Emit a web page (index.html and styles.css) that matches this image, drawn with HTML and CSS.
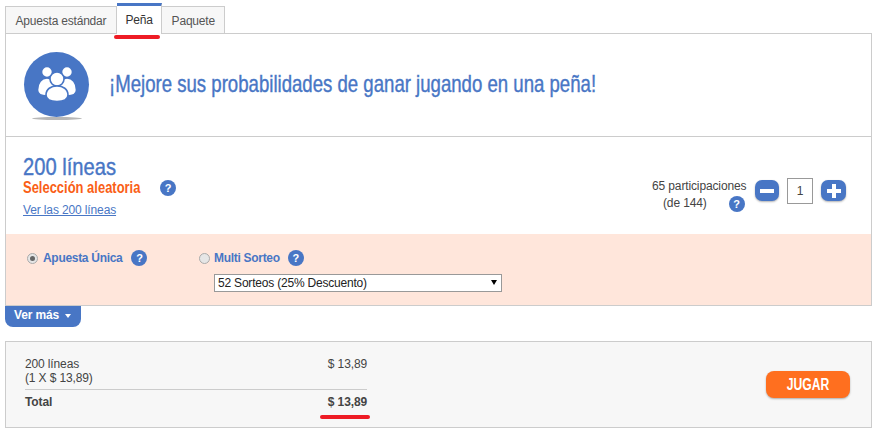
FILE: index.html
```html
<!DOCTYPE html>
<html lang="es">
<head>
    <meta charset="UTF-8">
    <meta name="viewport" content="width=device-width, initial-scale=1.0">
    <title>Peña</title>
    <link rel="stylesheet" href="styles.css">
</head>
<body>
    <div class="tabs">
        <div class="tab">Apuesta estándar</div>
        <div class="tab active">Peña<span class="mark mark-tab"></span></div>
        <div class="tab">Paquete</div>
    </div>

    <div class="panel">
        <div class="hero">
            <div class="hero-icon">
                <div class="hero-circle">
                    <svg width="40" height="36" viewBox="0 0 40 36">
                        <g fill="#fff" stroke="#4876c5" stroke-width="1.6">
                            <circle cx="10" cy="6" r="5.5"/>
                            <circle cx="30" cy="6" r="5.5"/>
                            <path d="M.5 24c0-7 4-12 9.500-12s9.500 5 9.500 12c0 4-4 6-9.500 6S.5 28 .5 24z"/>
                            <path d="M20.500 24c0-7 4-12 9.500-12s9.500 5 9.500 12c0 4-4 6-9.500 6s-9.500-2-9.500-6z"/>
                            <circle cx="20" cy="13" r="7"/>
                            <path d="M9 29c0-6 5-9 11-9s11 3 11 9c0 5-5 6.500-11 6.500S9 34 9 29z"/>
                        </g>
                    </svg>
                </div>
                <div class="hero-shadow"></div>
            </div>
            <h1>¡Mejore sus probabilidades de ganar jugando en una peña!</h1>
        </div>

        <div class="lines">
            <div class="lines-info">
                <div class="lines-title">200 líneas</div>
                <div class="lines-sub">
                    <span class="lines-sub-text">Selección aleatoria</span>
                    <span class="help">?</span>
                </div>
                <a class="lines-link" href="#">Ver las 200 líneas</a>
            </div>
            <div class="shares">
                <div class="shares-text">
                    <div class="shares-top">65 participaciones</div>
                    <div class="shares-bottom"><span>(de 144)</span><span class="help">?</span></div>
                </div>
                <button class="step step-minus" type="button">
                    <svg width="16" height="16" viewBox="0 0 16 16"><rect x="1" y="6" width="14" height="4" fill="#fff"/></svg>
                </button>
                <div class="qty">1</div>
                <button class="step" type="button">
                    <svg width="16" height="16" viewBox="0 0 16 16"><path d="M6 1h4v5h5v4h-5v5H6v-5H1V6h5z" fill="#fff"/></svg>
                </button>
            </div>
        </div>

        <div class="options">
            <div class="option option-single">
                <span class="radio checked"></span>
                <span class="option-label">Apuesta Única</span>
                <span class="help">?</span>
            </div>
            <div class="option-multi">
                <div class="option">
                    <span class="radio"></span>
                    <span class="option-label">Multi Sorteo</span>
                    <span class="help">?</span>
                </div>
                <div class="draws-wrap">
                    <select class="draws">
                        <option>52 Sorteos (25% Descuento)</option>
                    </select>
                </div>
            </div>
        </div>
    </div>

    <div class="more">Ver más <span class="caret"></span></div>

    <div class="summary">
        <div class="summary-table">
            <div class="summary-row">
                <div>200 líneas<br>(1 X $ 13,89)</div>
                <div>$ 13,89</div>
            </div>
            <div class="summary-row summary-total">
                <div>Total</div>
                <div class="total-price">$ 13,89<span class="mark mark-total"></span></div>
            </div>
        </div>
        <button class="play" type="button"><span class="play-text">JUGAR</span></button>
    </div>
</body>
</html>
```

FILE: styles.css
```css
:root {
    --blue: #4876c5;
    --orange: #ff6f1f;
    --border: #cccccc;
    --text: #444444;
    --peach: #ffe6db;
    --red: #ee1c25;
}

body {
    margin: 0;
    width: 867px;
    padding: 3px 7px 0 5px;
    font-family: "Liberation Sans", Arial, sans-serif;
    font-size: 12px;
    letter-spacing: -0.13px;
    color: var(--text);
    background: #fff;
}

.tabs {
    display: flex;
    align-items: flex-end;
    height: 30px;
    letter-spacing: -0.2px;
}

.tab {
    position: relative;
    height: 26px;
    line-height: 28px;
    padding: 0 9.5px;
    border: 1px solid var(--border);
    border-bottom: 0;
    border-left-width: 0;
    background: #f7f7f7;
    color: #555;
}

.tab:first-child {
    border-left-width: 1px;
}

.tab.active {
    height: 27px;
    line-height: 29px;
    padding: 0 8.5px 1px;
    border-top: 3px solid var(--blue);
    background: #fff;
    color: #333;
    z-index: 1;
    margin-bottom: -1px;
}

.mark {
    position: absolute;
    height: 4px;
    border-radius: 2px;
    background: var(--red);
}

.mark-tab {
    left: -3px;
    right: 1px;
    bottom: -5px;
}

.panel {
    border: 1px solid var(--border);
    height: 271px;
}

.hero {
    display: flex;
    align-items: center;
    height: 102px;
    padding-left: 18px;
    border-bottom: 1px solid var(--border);
}

.hero-icon {
    width: 65px;
    margin-right: 20px;
    margin-top: 1px;
}

.hero-circle {
    display: flex;
    align-items: center;
    justify-content: center;
    width: 65px;
    height: 65px;
    border-radius: 50%;
    background: var(--blue);
}

.hero-shadow {
    width: 50px;
    height: 3px;
    margin: 0 auto;
    border-radius: 50%;
    background: #999;
    opacity: 0.7;
}

h1 {
    margin: 0 0 2px;
    font-size: 24px;
    font-weight: normal;
    letter-spacing: 0;
    white-space: nowrap;
    color: var(--blue);
    -webkit-text-stroke: 0.4px var(--blue);
    transform: scaleX(0.775);
    transform-origin: left center;
}

.lines {
    display: flex;
    justify-content: space-between;
    height: 97px;
    padding-left: 17px;
    padding-right: 25px;
}

.lines-info {
    padding-top: 17px;
}

.lines-title {
    font-size: 24px;
    line-height: 25px;
    letter-spacing: 0;
    color: var(--blue);
    -webkit-text-stroke: 0.4px var(--blue);
    transform: scaleX(0.84);
    transform-origin: left center;
}

.lines-sub {
    display: flex;
    align-items: center;
    height: 17px;
}

.lines-sub-text {
    width: 137px;
    font-size: 16px;
    font-weight: bold;
    letter-spacing: 0;
    white-space: nowrap;
    color: #fa5f17;
    transform: scaleX(0.81);
    transform-origin: left center;
}

.lines-link {
    display: inline-block;
    margin-top: 7px;
    color: var(--blue);
}

.help {
    display: inline-block;
    width: 16px;
    height: 16px;
    border-radius: 50%;
    background: var(--blue);
    color: #fff;
    font-size: 11px;
    font-weight: bold;
    line-height: 16px;
    text-align: center;
    vertical-align: middle;
}

.shares {
    display: flex;
    align-items: flex-start;
    padding-top: 43px;
}

.shares-text {
    width: 94px;
    margin-top: -2px;
    margin-right: 9px;
    line-height: 17px;
    white-space: nowrap;
}

.shares-bottom {
    display: flex;
    align-items: center;
    gap: 22px;
    padding-left: 11px;
}

.step {
    display: flex;
    align-items: center;
    justify-content: center;
    width: 25px;
    height: 21px;
    padding: 0;
    border: 0;
    border-radius: 7px;
    background: var(--blue);
    box-shadow: 0 1px 2px rgba(0, 0, 0, 0.3);
}

.step-minus {
    width: 24px;
}

.qty {
    width: 24px;
    height: 24px;
    margin: -2px 8px 0;
    border: 1px solid #999;
    background: #fff;
    text-align: center;
    line-height: 24px;
}

.options {
    display: flex;
    align-items: flex-start;
    height: 71px;
    background: var(--peach);
    padding-left: 21px;
}

.option {
    display: flex;
    align-items: center;
    height: 20px;
    margin-top: 14px;
}

.option-single {
    width: 172px;
}

.option-single .radio {
    margin-right: 5px;
}

.option-single .option-label {
    margin-right: 9px;
}

.option-multi {
    display: flex;
    flex-direction: column;
}

.radio {
    position: relative;
    width: 9px;
    height: 9px;
    margin-right: 4px;
    border: 1px solid #aaa;
    border-radius: 50%;
    background: #e6e6e6;
}

.radio.checked::after {
    content: "";
    position: absolute;
    top: 2px;
    left: 2px;
    width: 5px;
    height: 5px;
    border-radius: 50%;
    background: #666;
}

.option-label {
    font-weight: bold;
    letter-spacing: -0.3px;
    color: var(--blue);
    margin-right: 8px;
}

.draws-wrap {
    position: relative;
    width: 288px;
    height: 18px;
    margin: 6px 0 0 15px;
}

.draws-wrap::after {
    content: "";
    position: absolute;
    top: 6px;
    right: 5px;
    border: 3.5px solid transparent;
    border-top: 5px solid #000;
    border-bottom-width: 0;
    pointer-events: none;
}

.draws {
    display: block;
    width: 100%;
    height: 100%;
    padding: 0 0 0 3px;
    border: 1px solid #999;
    border-radius: 0;
    background: #fff;
    color: #222;
    font-family: "Liberation Sans", sans-serif;
    font-size: 12px;
    letter-spacing: -0.2px;
    appearance: none;
}

.more {
    width: 67px;
    height: 21px;
    padding-left: 9px;
    border-radius: 0 0 8px 8px;
    background: var(--blue);
    color: #fff;
    font-weight: bold;
    line-height: 19px;
}

.caret {
    display: inline-block;
    margin-left: 3px;
    border: 3px solid transparent;
    border-top: 4px solid #fff;
    border-bottom-width: 0;
    vertical-align: middle;
}

.summary {
    display: flex;
    justify-content: space-between;
    align-items: center;
    height: 85px;
    margin-top: 14px;
    padding: 0 21px 0 19px;
    border: 1px solid var(--border);
    background: #f7f7f7;
}

.summary-table {
    align-self: flex-start;
    width: 342px;
    padding-top: 15px;
}

.summary-row {
    display: flex;
    justify-content: space-between;
    line-height: 14px;
}

.summary-total {
    margin-top: 4px;
    padding-top: 5px;
    border-top: 1px solid var(--border);
    font-weight: bold;
}

.total-price {
    position: relative;
}

.mark-total {
    left: -8px;
    right: -3px;
    bottom: -10px;
}

.play {
    width: 84px;
    height: 27px;
    padding: 0;
    border: 0;
    border-radius: 8px;
    background: var(--orange);
    box-shadow: 0 1px 2px rgba(0, 0, 0, 0.3);
    color: #fff;
}

.play-text {
    display: inline-block;
    font-family: "Liberation Sans", sans-serif;
    font-size: 16px;
    font-weight: bold;
    transform: scaleX(0.76);
}
```
